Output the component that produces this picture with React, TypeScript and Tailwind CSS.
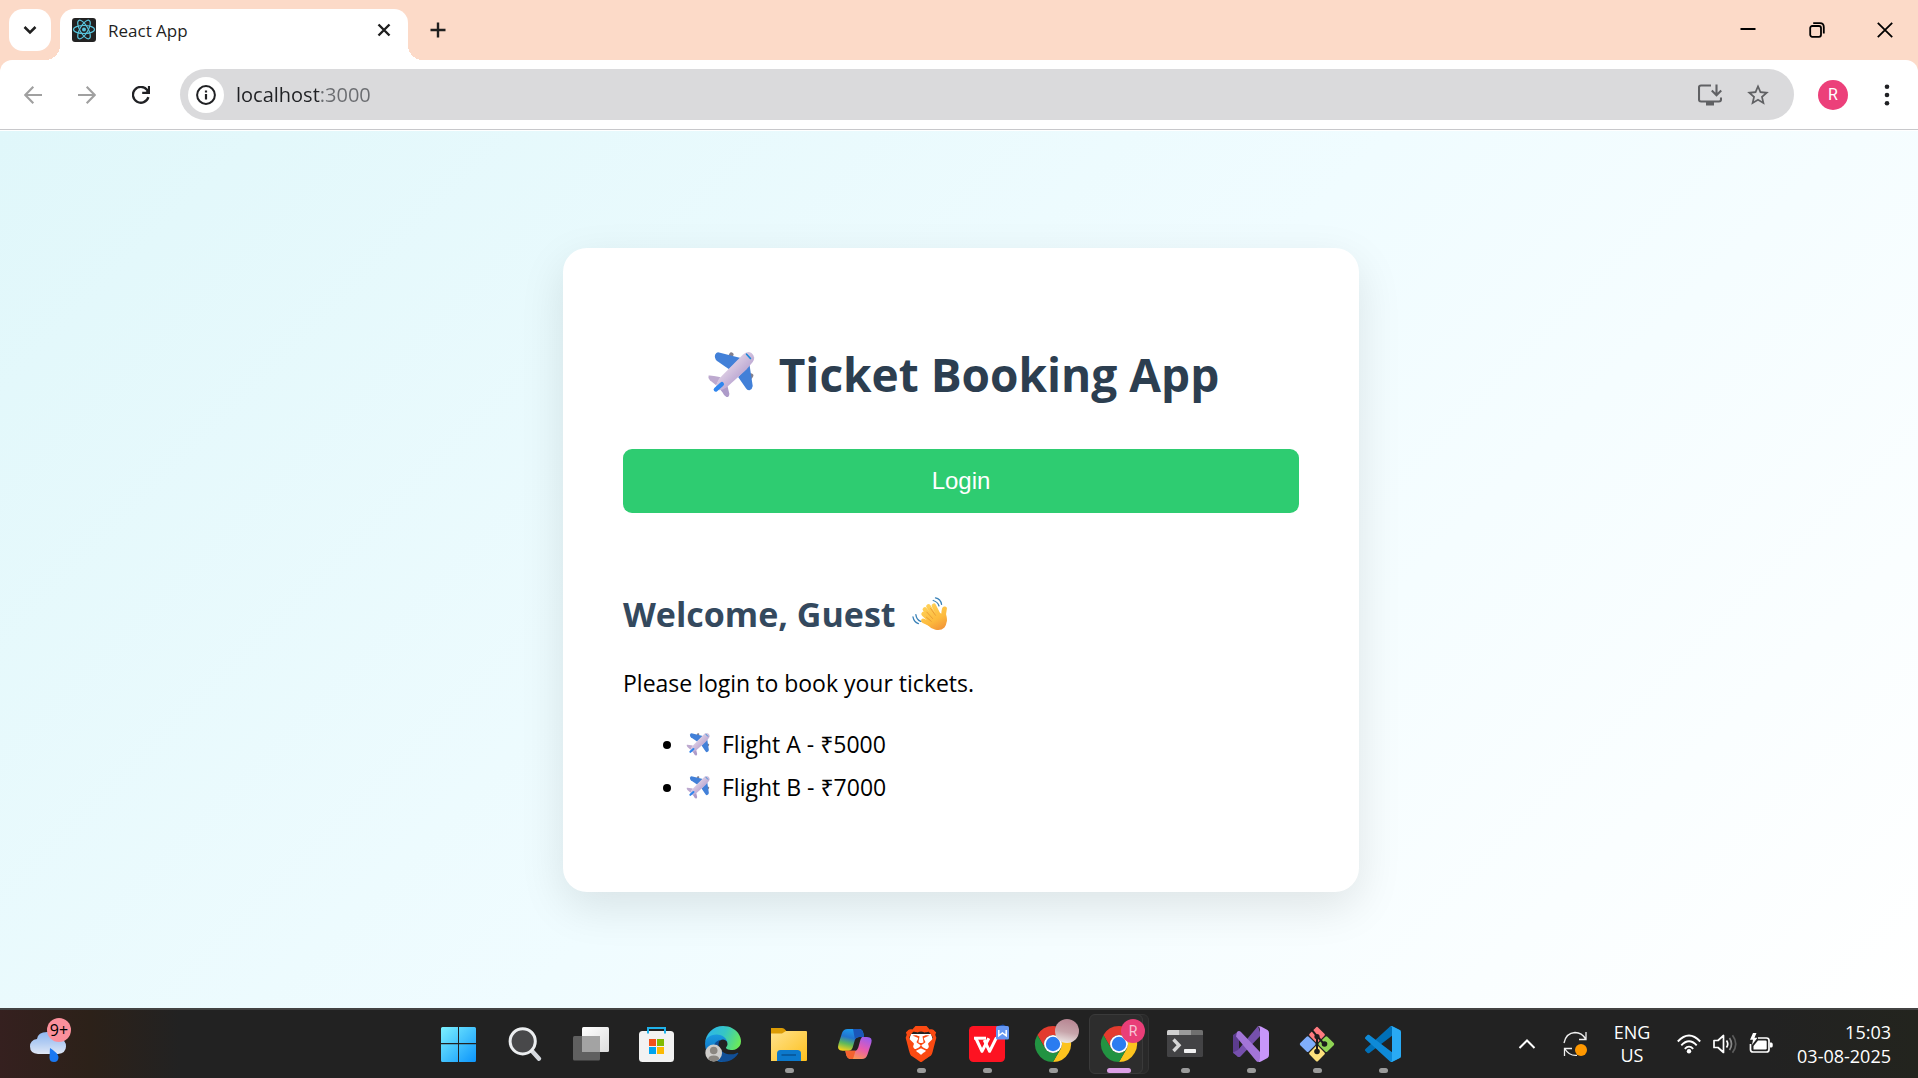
import type { ReactNode } from "react";
import { SiBrave } from "react-icons/si";

function Plane({ className }: { className: string }) {
  return (
    <svg viewBox="20 18 148 146" className={className} role="img" aria-label="Airplane">
      <defs>
        <linearGradient id="fuselage" x1="0" y1="0" x2="1" y2="1">
          <stop offset="0.3" stopColor="#e2d3e6" />
          <stop offset="0.7" stopColor="#b7a3d0" />
        </linearGradient>
      </defs>
      <rect x="88" y="24" width="13" height="16" rx="5" fill="#85808c" transform="rotate(30 94 32)" />
      <rect x="149" y="89" width="13" height="16" rx="5" fill="#85808c" transform="rotate(30 155 97)" />
      <path d="M54 24 L124 42 L88 76 L50 50 Q42 42 45 32 Q48 24 54 24Z" fill="#4280d8" />
      <path d="M151 62 L161 128 Q160 138 151 141 Q144 142 140 135 L116 100Z" fill="#4280d8" />
      <path d="M25 96 Q30 94 62 101 L48 126 L29 110 Q22 102 25 96Z" fill="#bda9cf" />
      <path d="M80 116 L89 152 Q88 164 80 162 Q72 158 68 148 L58 136Z" fill="#ad9bc9" />
      <path d="M131 31 Q144 18 157 26 Q172 38 161 54 L141 78 L80 133 Q62 145 49 139 Q44 132 57 106Z" fill="url(#fuselage)" />
      <path d="M47 139 L66 122" stroke="#2f86ee" strokeWidth="13" strokeLinecap="round" />
      <path d="M142 30 L154 43" stroke="#1687d9" strokeWidth="5" strokeLinecap="round" />
    </svg>
  );
}

function Wave({ className }: { className: string }) {
  return (
    <svg viewBox="18 16 112 112" className={className} role="img" aria-label="Waving hand" fill="none" strokeLinecap="round">
      <defs>
        <linearGradient id="skin" gradientUnits="userSpaceOnUse" x1="60" y1="40" x2="105" y2="125">
          <stop offset="0" stopColor="#ffd35c" />
          <stop offset="0.6" stopColor="#fdbb3d" />
          <stop offset="1" stopColor="#f29337" />
        </linearGradient>
      </defs>
      <g stroke="url(#skin)" strokeWidth="14">
        <path d="M53 93 L84 108" />
        <path d="M54 72 L84 100" />
        <path d="M69 48 L94 86" />
        <path d="M86 46 L104 82" />
        <path d="M58 58 L88 92" />
        <path d="M119 56 Q114 72 119 90" strokeWidth="15" />
      </g>
      <path d="M70 78 L96 66 L124 76 Q130 100 119 114 Q108 125 91 121 Q76 117 62 102Z" fill="url(#skin)" />
      <path d="M64 66 L82 86 M76 55 L91 76 M63 82 L78 95" stroke="#e59431" strokeWidth="2.5" />
      <path d="M84 30 Q98 34 102 47 M91 22 Q107 25 110 42 M21 81 Q24 97 38 102 M30 74 Q32 90 45 95" stroke="#3a82b8" strokeWidth="4" />
    </svg>
  );
}

function ReactMark() {
  return (
    <svg viewBox="0 0 24 24" className="size-6 shrink-0" fill="none" stroke="#58c4dc" strokeWidth="1.2">
      <rect width="24" height="24" rx="3" fill="#222" stroke="none" />
      <ellipse cx="12" cy="11.5" rx="10.5" ry="4" />
      <ellipse cx="12" cy="11.5" rx="10.5" ry="4" transform="rotate(60 12 11.5)" />
      <ellipse cx="12" cy="11.5" rx="10.5" ry="4" transform="rotate(120 12 11.5)" />
      <circle cx="12" cy="11.5" r="2" fill="#58c4dc" stroke="none" />
    </svg>
  );
}

function TabStrip() {
  return (
    <div className="flex h-[60px] items-end bg-[#fcdac8] pl-[9px]">
      <button aria-label="Search tabs" className="mb-[9px] grid size-[42px] place-items-center rounded-[14px] bg-white">
        <svg viewBox="0 0 16 16" className="size-4" fill="none" stroke="#1f1f1f" strokeWidth="2.5">
          <path d="M2.5 5 L8 10.5 L13.5 5" />
        </svg>
      </button>
      <div className="relative ml-[9px] flex h-[51px] w-[348px] items-center rounded-t-[14px] bg-white pr-3 pb-[9px] pl-3">
        <span className="absolute bottom-0 -left-[15px] size-[15px] bg-[radial-gradient(circle_at_0_0,transparent_15px,#fff_15px)]" />
        <span className="absolute -right-[15px] bottom-0 size-[15px] bg-[radial-gradient(circle_at_100%_0,transparent_15px,#fff_15px)]" />
        <ReactMark />
        <span className="ml-3 flex-1 pt-0.5 text-[17px] leading-6 text-[#1f1f1f]">React App</span>
        <button aria-label="Close tab" className="grid size-6 place-items-center">
          <svg viewBox="0 0 14 14" className="size-[14px]" stroke="#1f1f1f" strokeWidth="2.4">
            <path d="M1.5 1.5 L12.5 12.5 M12.5 1.5 L1.5 12.5" />
          </svg>
        </button>
      </div>
      <button aria-label="New tab" className="mb-[9px] ml-[9px] grid size-[42px] place-items-center">
        <svg viewBox="0 0 16 16" className="size-4" stroke="#1f1f1f" strokeWidth="2.4">
          <path d="M8 0.5 V15.5 M0.5 8 H15.5" />
        </svg>
      </button>
      <div className="ml-auto flex h-full">
        <button aria-label="Minimize" className="grid w-[69px] place-items-center">
          <svg viewBox="0 0 16 16" className="size-4" stroke="#000" strokeWidth="2">
            <path d="M0.5 7 H15.5" />
          </svg>
        </button>
        <button aria-label="Restore" className="grid w-[69px] place-items-center">
          <svg viewBox="0 0 16 16" className="size-4" fill="none" stroke="#000" strokeWidth="1.8">
            <rect x="1.2" y="4" width="10.8" height="10.8" rx="2" />
            <path d="M4.2 1.2 H11 Q14.8 1.2 14.8 5 V11.5" />
          </svg>
        </button>
        <button aria-label="Close window" className="grid w-[67px] place-items-center">
          <svg viewBox="0 0 16 16" className="size-4" stroke="#000" strokeWidth="1.8">
            <path d="M0.8 0.8 L15.2 15.2 M15.2 0.8 L0.8 15.2" />
          </svg>
        </button>
      </div>
    </div>
  );
}

function Toolbar() {
  const nav = "grid h-[51px] w-[54px] place-items-center";
  return (
    <div className="bg-[#fcdac8]">
      <div className="flex h-[70px] items-center rounded-t-[12px] border-b border-[#c8c8cb] bg-white pr-1 pl-[6px]">
        <button aria-label="Back" className={nav}>
          <svg viewBox="0 0 18 18" className="size-[18px]" fill="none" stroke="#a0a0a0" strokeWidth="2.1">
            <path d="M18 9 H1.5 M9.3 0.8 L1.3 9 L9.3 17.2" />
          </svg>
        </button>
        <button aria-label="Forward" className={nav}>
          <svg viewBox="0 0 18 18" className="size-[18px]" fill="none" stroke="#a0a0a0" strokeWidth="2.1">
            <path d="M0 9 H16.5 M8.7 0.8 L16.7 9 L8.7 17.2" />
          </svg>
        </button>
        <button aria-label="Reload" className={nav}>
          <svg viewBox="0 0 18 18" className="size-[18px]" fill="none" stroke="#202124" strokeWidth="2.3">
            <path d="M16.4 11.2 A7.9 7.9 0 1 1 15 3.8 L16 5.2" />
            <path d="M17 0 V6.9 H10.2" strokeWidth="2.2" />
            <path d="M17.5 2 V7.2 H12.6Z" fill="#202124" stroke="none" />
          </svg>
        </button>
        <div className="ml-3 flex h-[51px] flex-1 items-center rounded-full bg-[#dadadc] pr-3 pl-2">
          <button aria-label="Site information" className="grid size-9 place-items-center rounded-full bg-white">
            <svg viewBox="0 0 20 20" className="size-5" fill="none" stroke="#202124" strokeWidth="2">
              <circle cx="10" cy="10" r="8.9" />
              <path d="M10 9 V14.6 M10 5.4 V7.5" strokeWidth="2.2" />
            </svg>
          </button>
          <input
            aria-label="Address"
            defaultValue="localhost:3000"
            className="ml-3 h-9 min-w-0 flex-1 bg-[linear-gradient(90deg,#202124_84px,#6a6c70_84px)] bg-clip-text text-[20px] text-transparent outline-none"
          />
          <button aria-label="Install app" className="grid size-12 place-items-center">
            <svg viewBox="0 0 24 22" className="h-[22px] w-6" fill="none" stroke="#606164" strokeWidth="2.1">
              <path d="M13 1.5 H3 Q1 1.5 1 3.5 V15.5 Q1 17.5 3 17.5 H21 Q23 17.5 23 15.5 V13.5" />
              <path d="M8 18 V21.5 H16 V18Z" fill="#606164" stroke="none" />
              <path d="M18.5 0.5 V11 M13.8 6.6 L18.5 11.3 L23.2 6.6" />
            </svg>
          </button>
          <button aria-label="Bookmark" className="grid size-12 place-items-center">
            <svg viewBox="0 0 24 24" className="size-[26px]" fill="#606164">
              <path d="M22 9.24l-7.19-.62L12 2 9.19 8.63 2 9.24l5.46 4.73L5.82 21 12 17.27 18.18 21l-1.63-7.03L22 9.24zM12 15.4l-3.76 2.27 1-4.28-3.32-2.88 4.38-.38L12 6.1l1.71 4.04 4.38.38-3.32 2.88 1 4.28L12 15.4z" />
            </svg>
          </button>
        </div>
        <button aria-label="Profile" className="ml-3 grid h-[51px] w-[54px] place-items-center">
          <span className="grid size-[30px] place-items-center rounded-full bg-[#ec407a] font-[Roboto] text-[16px] leading-none text-white">R</span>
        </button>
        <button aria-label="Menu" className={nav}>
          <svg viewBox="0 0 6 22" className="h-[22px] w-[6px]" fill="#202124">
            <circle cx="3" cy="2.8" r="2.3" />
            <circle cx="3" cy="11" r="2.3" />
            <circle cx="3" cy="19.2" r="2.3" />
          </svg>
        </button>
      </div>
    </div>
  );
}

const flights = ["Flight A - ₹5000", "Flight B - ₹7000"];

function BookingPage() {
  return (
    <main className="flex flex-1 items-center justify-center border-t border-white bg-[linear-gradient(135deg,#e0f7fa,#f0fcff_50%,#ffffff)] py-10 pr-6 pl-7">
      <section className="w-full max-w-[796px] rounded-[24px] bg-white px-[60px] pt-[94px] pb-[83px] shadow-[0_15px_45px_rgba(0,0,0,0.1)]">
        <h1 className="flex items-center justify-center gap-6 pl-1 text-[46px] leading-[64px] font-bold text-[#2c3e50]">
          <Plane className="size-12" />
          Ticket Booking App
        </h1>
        <button className="mt-[43px] h-16 w-full rounded-[9px] bg-[#2ecc71] font-['Liberation_Sans',sans-serif] text-[24px] text-white">
          Login
        </button>
        <h2 className="mt-[77px] flex items-center gap-4 text-[34px] leading-[48px] font-bold text-[#34495e]">
          Welcome, Guest
          <Wave className="size-9" />
        </h2>
        <p className="mt-[29px] text-[23px] leading-8">Please login to book your tickets.</p>
        <ul className="mt-6 list-disc pl-[63px] text-[23px] leading-[43px]">
          {flights.map((flight) => (
            <li key={flight}>
              <Plane className="mr-3 inline size-6 align-[-3px]" />
              {flight}
            </li>
          ))}
        </ul>
      </section>
    </main>
  );
}

function Icon({ children }: { children: ReactNode }) {
  return (
    <svg viewBox="0 0 36 36" className="size-9 overflow-visible">
      {children}
    </svg>
  );
}

function ChromeShapes() {
  return (
    <g transform="scale(0.75)">
      <path d="M3.215 12 A24 24 0 0 1 44.785 12 L24 12 A12 12 0 0 0 13.608 30Z" fill="#e33b2e" />
      <path d="M44.785 12 A24 24 0 0 1 24 48 L34.392 30 A12 12 0 0 0 24 12Z" fill="#fcc31e" />
      <path d="M24 48 A24 24 0 0 1 3.215 12 L13.608 30 A12 12 0 0 0 34.392 30Z" fill="#229342" />
      <circle cx="24" cy="24" r="12" fill="#fff" />
      <circle cx="24" cy="24" r="9.6" fill="#2b7cf0" />
    </g>
  );
}

const apps: { name: string; running?: boolean; active?: boolean; badge?: string; icon: ReactNode }[] = [
  {
    name: "Start",
    icon: (
      <Icon>
        <defs>
          <linearGradient id="win" gradientUnits="userSpaceOnUse" x1="0" y1="0" x2="36" y2="36">
            <stop offset="0" stopColor="#7ef3ff" />
            <stop offset="1" stopColor="#0a93fb" />
          </linearGradient>
        </defs>
        <path d="M1.5 1 H17 V17 H0 V2.5Q0 1 1.5 1Z M18 1 H33.5 Q35 1 35 2.5 V17 H18Z M0 18.2 H17 V36 H1.5 Q0 36 0 34.5Z M18 18.2 H35 V34.5 Q35 36 33.5 36 H18Z" fill="url(#win)" />
      </Icon>
    ),
  },
  {
    name: "Search",
    icon: (
      <Icon>
        <path d="M25 25 L32 32.7" stroke="#d5d9de" strokeWidth="4.4" strokeLinecap="round" />
        <circle cx="15.7" cy="15.3" r="12.6" fill="#48484a" stroke="#eceef0" strokeWidth="3" />
      </Icon>
    ),
  },
  {
    name: "Task view",
    icon: (
      <Icon>
        <defs>
          <linearGradient id="pane" x1="0" y1="0" x2="1" y2="1">
            <stop offset="0" stopColor="#fff" />
            <stop offset="1" stopColor="#dcdcdc" />
          </linearGradient>
        </defs>
        <rect x="9" y="1" width="27" height="25" rx="1.5" fill="url(#pane)" />
        <rect x="0" y="10" width="27" height="24.5" rx="1.5" fill="#6b6b6b" fillOpacity="0.85" />
        <path d="M9 10 H27 V26 H9Z" fill="#a3a3a3" />
      </Icon>
    ),
  },
  {
    name: "Store",
    icon: (
      <Icon>
        <rect x="0" y="5" width="35" height="31" rx="3.5" fill="#f2f2f2" />
        <path d="M9 7.5 V2 H26 V7.5" fill="none" stroke="#1fb2ea" strokeWidth="2" />
        <rect x="10" y="13" width="7" height="7" fill="#f1511b" />
        <rect x="18" y="13" width="7" height="7" fill="#80bb03" />
        <rect x="10" y="21" width="7" height="7" fill="#00a4ee" />
        <rect x="18" y="21" width="7" height="7" fill="#fbb903" />
      </Icon>
    ),
  },
  {
    name: "Edge",
    icon: (
      <Icon>
        <defs>
          <linearGradient id="edge-top" x1="0" y1="0.3" x2="1" y2="0.6">
            <stop offset="0" stopColor="#2bb5ec" />
            <stop offset="0.5" stopColor="#36c6c4" />
            <stop offset="1" stopColor="#6bea58" />
          </linearGradient>
          <linearGradient id="edge-mid" x1="0" y1="0" x2="0" y2="1">
            <stop offset="0" stopColor="#1b9de2" />
            <stop offset="1" stopColor="#0a62b8" />
          </linearGradient>
        </defs>
        <g transform="scale(0.1406)">
          <path fill="url(#edge-mid)" d="M105.73 241.42a79.2 79.2 0 0 1-22.74-21.34 80.72 80.72 0 0 1 29.6-119.95c3.13-1.48 8.48-4.15 15.6-4.02a32.37 32.37 0 0 1 25.69 13.02 31.88 31.88 0 0 1 6.36 18.66c0-.21 24.46-79.6-80-79.6-43.9 0-80 41.66-80 78.21a130.15 130.15 0 0 0 12.11 56 128 128 0 0 0 156.38 67.11 75.55 75.55 0 0 1-62.78-8z" />
          <path fill="#114f97" d="M231.07 190.54c-3.42 1.78-6.95 3.34-10.56 4.68a101.92 101.92 0 0 1-35.87 6.46c-47.29 0-88.48-32.52-88.48-74.26a31.43 31.43 0 0 1 16.43-27.31c-42.77 1.8-53.76 46.37-53.76 72.48 0 73.83 68.05 81.32 82.71 81.32 7.91 0 19.83-2.3 27-4.56l1.31-.44a128.34 128.34 0 0 0 66.6-52.8 4 4 0 0 0-5.38-5.57z" />
          <path fill="url(#edge-top)" d="M152.33 148.86c-.81 1.05-3.3 2.5-3.3 5.66 0 2.61 1.7 5.12 4.72 7.23 14.38 10 41.49 8.68 41.56 8.68a59.56 59.56 0 0 0 30.27-8.35 61.38 61.38 0 0 0 30.43-52.88c.26-22.41-8-37.31-11.34-43.91C223.46 23.84 177.72 0 128 0a128 128 0 0 0-128 126.2c.48-36.54 36.8-66.05 80-66.05 3.5 0 23.46.34 42 10.07 16.34 8.58 24.9 18.94 30.85 29.21 6.18 10.67 7.28 24.15 7.28 29.52 0 5.37-2.74 13.33-7.8 19.91z" />
        </g>
        <circle cx="8.7" cy="27" r="8.4" fill="#cfcdca" />
        <circle cx="8.7" cy="24.5" r="3.8" fill="#8b8680" />
        <path d="M3.2 33.2 Q3.2 29.4 8.7 29.4 Q14.2 29.4 14.2 33.2 Q11.5 35.4 8.7 35.4 Q5.9 35.4 3.2 33.2Z" fill="#8b8680" />
      </Icon>
    ),
  },
  {
    name: "File Explorer",
    running: true,
    icon: (
      <Icon>
        <defs>
          <linearGradient id="folder" x1="0" y1="0" x2="1" y2="1">
            <stop offset="0" stopColor="#ffe38d" />
            <stop offset="1" stopColor="#fdbf1c" />
          </linearGradient>
        </defs>
        <path d="M0 2 H11 Q13 2 14.5 4 L16 6 V12 H0Z" fill="#dc9c05" />
        <path d="M0 7.5 H11 L15 5 H35 Q36 5 36 6 V34 Q36 35 35 35 H0Z" fill="url(#folder)" />
        <path d="M6 35 V27.5 Q6 24 9.5 24 H26.5 Q30 24 30 27.5 V35Z" fill="#0c79cc" />
        <path d="M10.5 29 H25" stroke="#08518f" strokeWidth="1.4" />
      </Icon>
    ),
  },
  {
    name: "Copilot",
    icon: (
      <Icon>
        <defs>
          <linearGradient id="cop-a" x1="0.6" y1="0" x2="0.3" y2="1">
            <stop offset="0" stopColor="#1b9cf0" />
            <stop offset="0.4" stopColor="#2275d0" />
            <stop offset="0.7" stopColor="#5fb95a" />
            <stop offset="1" stopColor="#f3d11e" />
          </linearGradient>
          <linearGradient id="cop-b" x1="0.8" y1="0" x2="0.3" y2="1">
            <stop offset="0" stopColor="#9b5cf0" />
            <stop offset="0.5" stopColor="#e95cae" />
            <stop offset="1" stopColor="#fc9a4c" />
          </linearGradient>
        </defs>
        <path d="M25 11 H30 Q36 11 34.3 17 L30.5 28.5 Q29 33 25 33 H14 Q10 33 9 28 L8.4 24.8 H13.5 L18.5 24.8 Q20.5 24 21.3 21.500 L23.500 13.500Z" fill="url(#cop-b)" />
        <path d="M10.5 3 H22 Q25.5 3 26.3 7 L27 11 H22 Q19 11 18 13.6 L15.5 22 Q14.5 24.8 12 24.8 H5.5 Q-0.5 24.8 1.5 18 L5 7 Q6.5 3 10.5 3Z" fill="url(#cop-a)" />
        <path d="M16 3 H22 Q25.5 3 26.3 7 L27 11 H22 Q19 11 18 13.6Z" fill="#1b56b8" />
        <path d="M8.4 24.8 H18.5 L16 33 H14 Q10 33 9 28Z" fill="#f4622f" />
      </Icon>
    ),
  },
  {
    name: "Brave",
    running: true,
    icon: (
      <svg viewBox="0 0 36 36" className="size-9">
        <path d="M8 8 H28 L30 14 L27 27 L18 33 L9 27 L6 14Z" fill="#fff" />
        <SiBrave x={0} y={0} size={36} color="#fb4a12" />
      </svg>
    ),
  },
  {
    name: "WPS Office",
    running: true,
    icon: (
      <Icon>
        <rect width="36" height="36" rx="4.5" fill="#fd1322" />
        <g fill="none" stroke="#fff" strokeWidth="3" strokeLinejoin="round">
          <path d="M5 12.2 H17" />
          <path d="M7 12.5 L13 25.3 L19.8 12.2" />
          <path d="M15.2 14 L20.6 25.3 L27.5 11.5" />
        </g>
        <path d="M29 0 L34 -1.5 L37 0Z" fill="#1d4fa8" />
        <rect x="27" y="0" width="13" height="13.5" rx="1.5" fill="#6596f2" />
        <path d="M29.8 4 V9.8 L33.4 7 L37.2 9.8 V4" fill="none" stroke="#fff" strokeWidth="1.5" />
      </Icon>
    ),
  },
  {
    name: "Chrome",
    running: true,
    icon: (
      <Icon>
        <defs>
          <linearGradient id="ball" x1="0.6" y1="0" x2="0.4" y2="1">
            <stop offset="0" stopColor="#b78592" />
            <stop offset="0.55" stopColor="#c7a5ab" />
            <stop offset="1" stopColor="#ece6e4" />
          </linearGradient>
        </defs>
        <ChromeShapes />
        <circle cx="32" cy="5" r="12" fill="url(#ball)" />
      </Icon>
    ),
  },
  { name: "Chrome, profile R", active: true, badge: "R", icon: <Icon><ChromeShapes /></Icon> },
  {
    name: "Terminal",
    running: true,
    icon: (
      <Icon>
        <rect y="4" width="36" height="27" rx="1.5" fill="#434345" />
        <path d="M1.5 4 H12 V9 H0 V5.5 Q0 4 1.5 4Z" fill="#cfcfcf" />
        <path d="M12 4 H24 V9 H12Z" fill="#9b9b9b" />
        <path d="M24 4 H34.5 Q36 4 36 5.5 V9 H24Z" fill="#707070" />
        <path d="M6.5 13.5 L12 19.2 L6.5 25" fill="none" stroke="#d6d6d6" strokeWidth="3.4" />
        <rect x="17" y="23" width="12" height="4" rx="0.8" fill="#f2f2f2" />
      </Icon>
    ),
  },
  {
    name: "Visual Studio",
    running: true,
    icon: (
      <Icon>
        <path d="M0 9 L6 5 V31 L0 27Z" fill="#5c3c8e" />
        <path d="M25 0 L28 9 L7.5 30.5 Q5 32 3.5 29.5 L0 26.5 L5 24Z" fill="#7650ad" />
        <path d="M4 6 Q6 4 8 6 L27 26 L28 34 L25 36 Q24 36 22 33.5 L3 10.5Z" fill="#a375d8" />
        <path d="M25 0 Q26 -0.3 28 0.5 L34.5 4 Q36 5 36 7 V29 Q36 31 34.5 32 L28 35.5 Q26 36.3 25 36 Q27 35 27 32 V4 Q27 1 25 0Z" fill="#c896fa" />
      </Icon>
    ),
  },
  {
    name: "Git",
    running: true,
    icon: (
      <Icon>
        <g transform="rotate(45 18 18)">
          <rect x="5.5" y="5.5" width="12" height="12" rx="1.5" fill="#ff7b80" />
          <rect x="18.7" y="5.5" width="12" height="12" rx="1.5" fill="#90d455" />
          <rect x="5.5" y="18.7" width="12" height="12" rx="1.5" fill="#80aefc" />
          <rect x="18.7" y="18.7" width="12" height="12" rx="1.5" fill="#fde07c" />
        </g>
        <path d="M12 3 L18 10 V26 M18 10 L25 18" fill="none" stroke="#1c1c1c" strokeWidth="2" />
        <circle cx="18" cy="10.5" r="2.6" fill="#1c1c1c" />
        <circle cx="25.5" cy="18" r="2.8" fill="#1c1c1c" />
        <circle cx="18" cy="25.5" r="2.8" fill="#1c1c1c" />
      </Icon>
    ),
  },
  {
    name: "Visual Studio Code",
    running: true,
    icon: (
      <svg viewBox="0 0 100 100" className="size-9">
        <path fill="#0070b8" d="M96.46 10.8L75.86.88c-2.39-1.15-5.24-.67-7.11 1.2L1.3 63.58c-1.82 1.66-1.81 4.51 0 6.17l5.51 5c1.49 1.35 3.72 1.45 5.32.24L93.36 13.37C96.09 11.3 100 13.25 100 16.67v-.24c0-2.4-1.38-4.59-3.54-5.63z" />
        <path fill="#0e8ad8" d="M96.46 89.2L75.86 99.12c-2.39 1.15-5.24.67-7.11-1.2L1.3 36.42c-1.82-1.66-1.81-4.51 0-6.17l5.51-5c1.49-1.35 3.72-1.45 5.32-.24L93.36 86.63C96.09 88.7 100 86.75 100 83.33v.24c0 2.4-1.38 4.59-3.54 5.63z" />
        <path fill="#29aaf4" d="M75.86 99.13c-2.39 1.14-5.24.66-7.11-1.21 2.31 2.3 6.25.67 6.25-2.59V4.67c0-3.26-3.94-4.89-6.25-2.59 1.87-1.87 4.72-2.35 7.11-1.21l20.6 9.91c2.16 1.04 3.54 3.23 3.54 5.63v67.18c0 2.4-1.38 4.59-3.54 5.63z" />
      </svg>
    ),
  },
];

function Taskbar() {
  return (
    <footer className="flex h-[70px] items-center border-t-2 border-[#434343] bg-[linear-gradient(90deg,#35201f,#2c2119_90px,#222222_180px,#222222_92%,#23241e)] text-white">
      <div className="w-[426px] shrink-0 self-start pt-2 pl-[30px]">
        <button aria-label="Weather, 9+ notifications" className="relative block h-11 w-10">
          <svg viewBox="0 0 40 44" className="h-11 w-10">
            <defs>
              <linearGradient id="cloud" x1="0" y1="0" x2="0" y2="1">
                <stop offset="0" stopColor="#8fb7f0" />
                <stop offset="0.5" stopColor="#b3cdf3" />
                <stop offset="1" stopColor="#dfe7f6" />
              </linearGradient>
            </defs>
            <path d="M8 36 Q0 35.5 0 28.5 Q0 22 7 21 Q8 14 17 14 H24 Q30 17 30 21 Q36 22 36 28.5 Q36 35 28 36Z" fill="url(#cloud)" />
            <path d="M20 30 Q28 35 28.5 39 Q28.5 44 24 44 Q19.5 44 19.5 39.5Z" fill="#1a78f2" />
          </svg>
          <span className="absolute top-0 left-[17px] grid size-6 place-items-center rounded-full bg-[#fb909c] text-[16px] leading-none text-black">9+</span>
        </button>
      </div>
      <nav aria-label="Apps" className="flex h-full">
        {apps.map((app) => (
          <div key={app.name} className="relative flex w-[66px] justify-center py-1">
            {app.active && <span className="absolute inset-y-1 left-10 w-[23px] rounded-[6px] border border-[#333] bg-[#292929]" />}
            {app.active && <span className="absolute inset-y-1 left-[3px] w-[54px] rounded-[6px] border border-[#3a3a3a] bg-[#2d2d2d]" />}
            <button aria-label={app.name} className="relative flex w-[60px] flex-col items-center gap-[6px] pt-3">
              {app.icon}
              {app.badge && (
                <span className="absolute top-[5px] left-[32px] grid size-6 place-items-center rounded-full bg-[#e93e78] font-[Roboto] text-[14px] leading-none text-[#f7c4d6]">
                  {app.badge}
                </span>
              )}
              {app.running && <span className="h-[5px] w-[9px] rounded-full bg-[#9b9b9b]" />}
              {app.active && <span className="h-[5px] w-6 rounded-full bg-[#dc9fe6]" />}
            </button>
          </div>
        ))}
      </nav>
      <div className="ml-auto flex items-center pr-[27px]">
        <button aria-label="Hidden icons" className="grid size-12 place-items-center">
          <svg viewBox="0 0 18 10" className="h-[10px] w-[18px]" fill="none" stroke="#fff" strokeWidth="2">
            <path d="M1.5 9 L9 1.5 L16.5 9" />
          </svg>
        </button>
        <button aria-label="Updates" className="grid size-12 place-items-center">
          <svg viewBox="0 0 24 26" className="h-[26px] w-6" fill="none" stroke="#f0f0f0" strokeWidth="1.3">
            <path d="M1 12 Q3 2 12 1.5 Q19 1.5 22.5 8 M23 1 V8.5 H16" />
            <path d="M1.5 25 V17.5 H9 M2 18 Q6 25 14 24.3" />
            <circle cx="18" cy="19" r="6" fill="#ff9800" stroke="none" />
          </svg>
        </button>
        <button className="w-[66px] text-center text-[18px] leading-[23px]">
          ENG
          <br />
          US
        </button>
        <button aria-label="Network, sound and battery" className="flex items-center gap-3 px-3">
          <svg viewBox="0 0 24 20" className="h-5 w-6" fill="none" stroke="#fff" strokeWidth="1.9">
            <path d="M0.8 7.5 Q12 -4.5 23.2 7.5 M4.3 11.3 Q12 3.2 19.7 11.3 M7.8 14.8 Q12 10.5 16.2 14.8" />
            <circle cx="12" cy="17.3" r="2.2" fill="#fff" stroke="none" />
          </svg>
          <svg viewBox="0 0 24 20" className="h-5 w-6" fill="none" stroke="#fff" strokeWidth="1.7">
            <path d="M1 6.5 H5 L10.5 1.5 V18.5 L5 13.5 H1Z" strokeLinejoin="round" />
            <path d="M13.5 6.5 Q16 10 13.5 13.5" />
            <path d="M16.5 4 Q20.5 10 16.5 16" stroke="#8a8a8a" />
            <path d="M19.5 1.3 Q26 10 19.5 18.7" stroke="#5c5c5c" />
          </svg>
          <svg viewBox="0 0 24 22" className="h-[22px] w-6" fill="none">
            <path d="M9 5 H17.5 Q20 5 20 7.5 V16.5 Q20 19 17.5 19 H4 Q1.5 19 1.5 16.5 V11" stroke="#fff" strokeWidth="1.7" />
            <path d="M9 7.5 H16.5 Q17.7 7.5 17.7 8.7 V15.3 Q17.7 16.5 16.5 16.5 H4.5 V13Z" fill="#fff" />
            <path d="M21 9.5 H22.5 Q23.8 9.5 23.8 12 Q23.8 14.5 22.5 14.5 H21Z" fill="#fff" />
            <path d="M4 0 L1 6.8 H4 L3 12 L8.5 4.8 H5.5 L7.5 0Z" fill="#fff" />
          </svg>
        </button>
        <button className="w-[106px] text-right text-[18px] leading-6">
          15:03
          <br />
          03-08-2025
        </button>
      </div>
    </footer>
  );
}

export default function App() {
  return (
    <div className="flex min-h-screen flex-col font-['Open_Sans','Noto_Sans',sans-serif] text-black">
      <header>
        <TabStrip />
        <Toolbar />
      </header>
      <BookingPage />
      <Taskbar />
    </div>
  );
}
